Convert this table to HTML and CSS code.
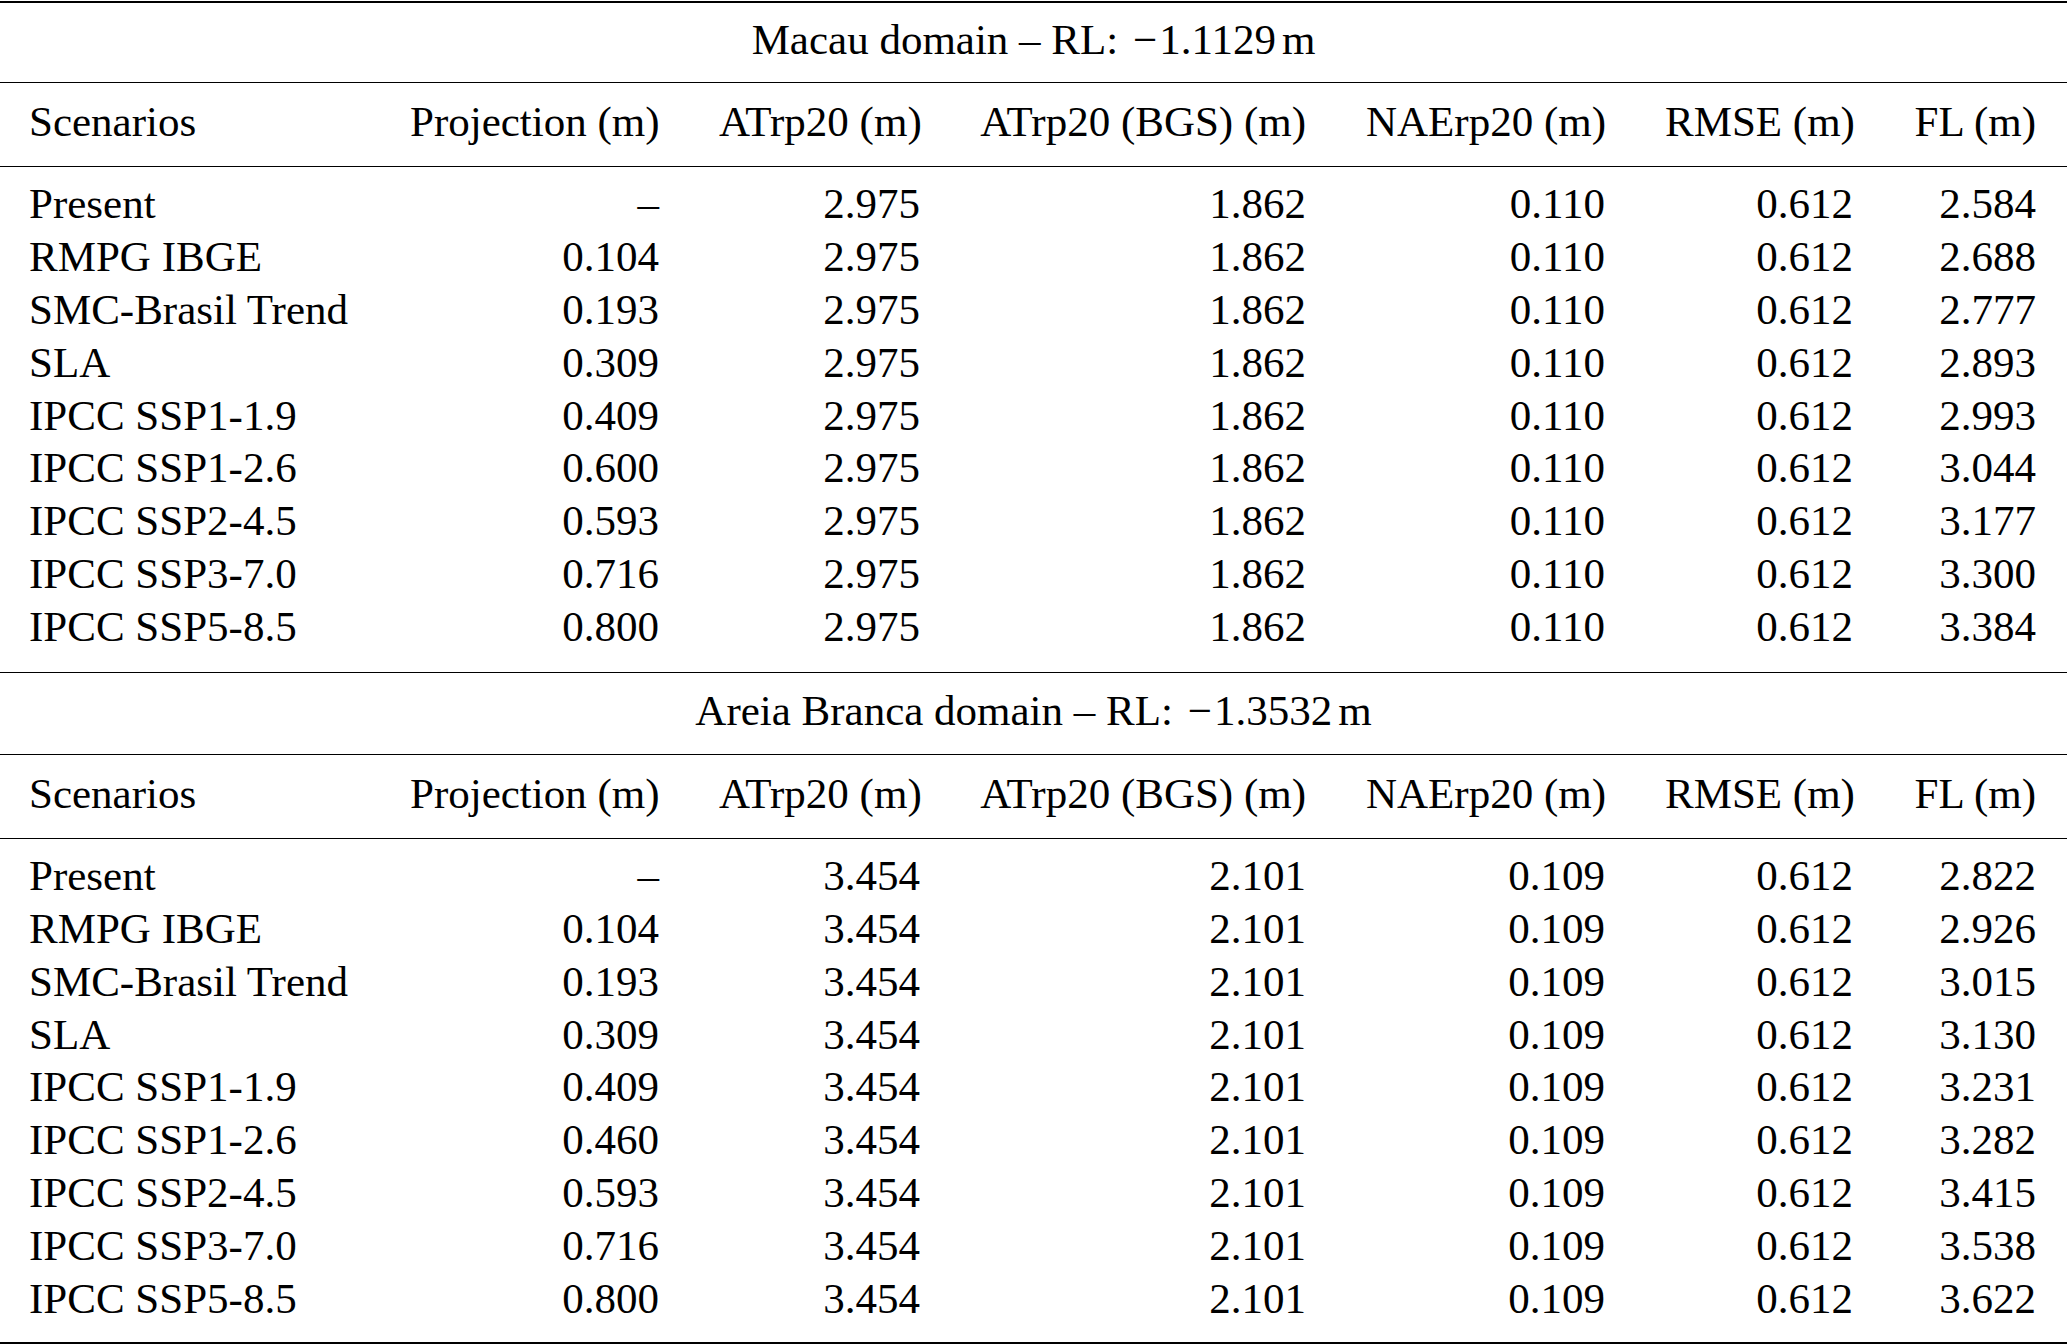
FILE: index.html
```html
<!DOCTYPE html>
<html>
<head>
<meta charset="utf-8">
<link rel="stylesheet" href="styles.css">
</head>
<body>
<table class="tbl">
  <colgroup>
    <col class="c1"><col class="c2"><col class="c3"><col class="c4"><col class="c5"><col class="c6"><col class="c7">
  </colgroup>
  <tbody>
    <tr class="title first"><td colspan="7">Macau domain – RL: <span class="mn">−</span>1.1129<span class="unit">m</span></td></tr>
    <tr class="head"><td>Scenarios</td><td>Projection (m)</td><td>ATrp20 (m)</td><td>ATrp20 (BGS) (m)</td><td>NAErp20 (m)</td><td>RMSE (m)</td><td>FL (m)</td></tr>
    <tr class="row top"><td>Present</td><td>–</td><td>2.975</td><td>1.862</td><td>0.110</td><td>0.612</td><td>2.584</td></tr>
    <tr class="row"><td>RMPG IBGE</td><td>0.104</td><td>2.975</td><td>1.862</td><td>0.110</td><td>0.612</td><td>2.688</td></tr>
    <tr class="row"><td>SMC-Brasil Trend</td><td>0.193</td><td>2.975</td><td>1.862</td><td>0.110</td><td>0.612</td><td>2.777</td></tr>
    <tr class="row"><td>SLA</td><td>0.309</td><td>2.975</td><td>1.862</td><td>0.110</td><td>0.612</td><td>2.893</td></tr>
    <tr class="row"><td>IPCC SSP1-1.9</td><td>0.409</td><td>2.975</td><td>1.862</td><td>0.110</td><td>0.612</td><td>2.993</td></tr>
    <tr class="row"><td>IPCC SSP1-2.6</td><td>0.600</td><td>2.975</td><td>1.862</td><td>0.110</td><td>0.612</td><td>3.044</td></tr>
    <tr class="row"><td>IPCC SSP2-4.5</td><td>0.593</td><td>2.975</td><td>1.862</td><td>0.110</td><td>0.612</td><td>3.177</td></tr>
    <tr class="row"><td>IPCC SSP3-7.0</td><td>0.716</td><td>2.975</td><td>1.862</td><td>0.110</td><td>0.612</td><td>3.300</td></tr>
    <tr class="row bottom"><td>IPCC SSP5-8.5</td><td>0.800</td><td>2.975</td><td>1.862</td><td>0.110</td><td>0.612</td><td>3.384</td></tr>
    <tr class="title second"><td colspan="7">Areia Branca domain – RL: <span class="mn">−</span>1.3532<span class="unit">m</span></td></tr>
    <tr class="head"><td>Scenarios</td><td>Projection (m)</td><td>ATrp20 (m)</td><td>ATrp20 (BGS) (m)</td><td>NAErp20 (m)</td><td>RMSE (m)</td><td>FL (m)</td></tr>
    <tr class="row top"><td>Present</td><td>–</td><td>3.454</td><td>2.101</td><td>0.109</td><td>0.612</td><td>2.822</td></tr>
    <tr class="row"><td>RMPG IBGE</td><td>0.104</td><td>3.454</td><td>2.101</td><td>0.109</td><td>0.612</td><td>2.926</td></tr>
    <tr class="row"><td>SMC-Brasil Trend</td><td>0.193</td><td>3.454</td><td>2.101</td><td>0.109</td><td>0.612</td><td>3.015</td></tr>
    <tr class="row"><td>SLA</td><td>0.309</td><td>3.454</td><td>2.101</td><td>0.109</td><td>0.612</td><td>3.130</td></tr>
    <tr class="row"><td>IPCC SSP1-1.9</td><td>0.409</td><td>3.454</td><td>2.101</td><td>0.109</td><td>0.612</td><td>3.231</td></tr>
    <tr class="row"><td>IPCC SSP1-2.6</td><td>0.460</td><td>3.454</td><td>2.101</td><td>0.109</td><td>0.612</td><td>3.282</td></tr>
    <tr class="row"><td>IPCC SSP2-4.5</td><td>0.593</td><td>3.454</td><td>2.101</td><td>0.109</td><td>0.612</td><td>3.415</td></tr>
    <tr class="row"><td>IPCC SSP3-7.0</td><td>0.716</td><td>3.454</td><td>2.101</td><td>0.109</td><td>0.612</td><td>3.538</td></tr>
    <tr class="row bottom last"><td>IPCC SSP5-8.5</td><td>0.800</td><td>3.454</td><td>2.101</td><td>0.109</td><td>0.612</td><td>3.622</td></tr>
  </tbody>
</table>
</body>
</html>
```
FILE: styles.css
```css
html, body {
  margin: 0;
  padding: 0;
  background: #ffffff;
}

body {
  font-family: "Liberation Serif", "Times New Roman", serif;
  font-size: 43px;
  color: #000000;
}

.tbl {
  width: 2067px;
  margin-top: 1px;
  border-collapse: separate;
  border-spacing: 0;
  table-layout: fixed;
}

.c1 { width: 380px; }
.c2 { width: 309px; }
.c3 { width: 261px; }
.c4 { width: 386px; }
.c5 { width: 299px; }
.c6 { width: 248px; }
.c7 { width: 184px; }

.tbl td {
  padding: 0 30px;
  line-height: 53px;
  text-align: right;
  white-space: nowrap;
  vertical-align: top;
}

.tbl td:first-child {
  padding-left: 29px;
  text-align: left;
}

.tbl tr.row td:last-child,
.tbl tr.head td:last-child {
  padding-right: 31px;
}

.tbl tr.title td {
  text-align: center;
  padding: 0;
  border-bottom: 1px solid #000;
}

.tbl tr.title.first td {
  border-top: 2px solid #000;
  padding-top: 10px;
  padding-bottom: 16px;
}

.tbl tr.title.second td {
  padding-top: 11px;
  padding-bottom: 17px;
}

.mn {
  margin-left: 4px;
  margin-right: 2px;
}

.unit {
  margin-left: 6px;
}

.tbl tr.head td {
  padding-top: 12px;
  padding-bottom: 18px;
  border-bottom: 1px solid #000;
}

.tbl tr.row td {
  line-height: 52.875px;
}

.tbl tr.row.top td {
  padding-top: 11px;
}

.tbl tr.row.bottom td {
  padding-bottom: 18px;
  border-bottom: 1px solid #000;
}

.tbl tr.row.bottom.last td {
  padding-bottom: 16px;
  border-bottom: 2px solid #000;
}
```
